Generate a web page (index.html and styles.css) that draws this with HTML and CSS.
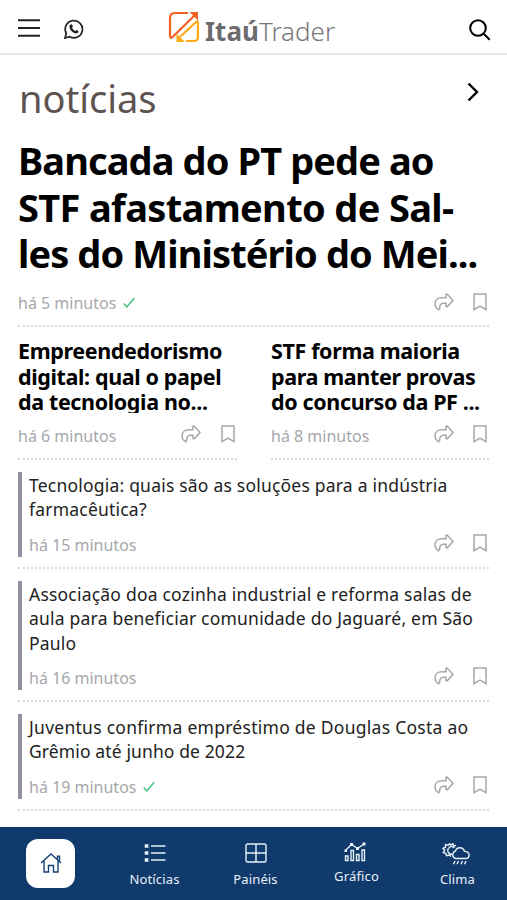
FILE: index.html
```html
<!DOCTYPE html>
<html lang="pt-BR">
<head>
<meta charset="utf-8">
<title>ItaúTrader</title>
<link rel="stylesheet" href="styles.css">
</head>
<body>
<svg class="defs" aria-hidden="true">
  <symbol id="share" viewBox="0 0 20 18"><path d="M12 4.700V1.400L13.200 1 19 7.500 13.200 13.800 12 13.400V10.300H9.600C6.600 10.300 5.500 12 5.700 15.600L4.600 16.800C2.300 15.400 1 13.400 1 10.800 1 7 4 4.700 8 4.700Z"/></symbol>
  <symbol id="bookmark" viewBox="0 0 14 18"><path d="M1 1H13V16.6L7 13 1 16.6Z"/></symbol>
  <symbol id="check" viewBox="0 0 12 12"><path d="M.8 6.4 3.8 9.9 11.2 1.2"/></symbol>
</svg>
<div class="app">
  <header class="top">
    <svg class="menu" viewBox="0 0 22 18"><path d="M0 1.3H22M0 9H22M0 16.7H22"/></svg>
    <svg class="whats" viewBox="0 0 20 20"><path d="M1 19 2.3 14.3A8.6 8.6 0 1 1 5.7 17.7Z"/><path class="phone" d="M6.9 5.2 8.1 5.4 8.9 7.5 8 8.8C8.8 10.4 9.9 11.3 11.4 12L12.4 10.9 14.5 12C14.5 13.8 13.3 14.5 12.2 14.5 8.8 14.2 5.7 11 5.5 8 5.4 6.7 6 5.5 6.9 5.2Z"/></svg>
    <div class="logo">
      <svg viewBox="0 0 32 32"><path class="l1" d="M20 2H7Q2 2 2 7V25Q2.500 28 4.500 26L26 5"/><path class="l1f" d="M21.5 1H30V9.5Z"/><path class="l2" d="M18 30H26Q30 30 30 26V12Q30 9 27.500 11.500L12 26"/><path class="l2f" d="M8.500 22.500V31H17Z"/></svg>
      <span class="name"><b>Itaú</b><span>Trader</span></span>
    </div>
    <svg class="search" viewBox="0 0 22 22"><circle cx="9" cy="9" r="7.8"/><path d="M14.7 14.7 20.7 20.7"/></svg>
  </header>
  <main>
    <div class="section"><h1>notícias</h1><svg class="next" viewBox="0 0 12 20"><path d="M1.5 1.5 10 10 1.5 18.5"/></svg></div>
    <article class="lead">
      <h2><span>Bancada do PT pede ao</span><span class="wide">STF afastamento de Sal-</span><span>les do Ministério do Mei...</span></h2>
      <div class="meta"><time>há 5 minutos</time><svg class="check"><use href="#check"/></svg><svg class="share"><use href="#share"/></svg><svg class="bookmark"><use href="#bookmark"/></svg></div>
    </article>
    <div class="pair">
      <article>
        <h3><span>Empreendedorismo</span><span>digital: qual o papel</span><span>da tecnologia no...</span></h3>
        <div class="meta"><time>há 6 minutos</time><svg class="share"><use href="#share"/></svg><svg class="bookmark"><use href="#bookmark"/></svg></div>
      </article>
      <article>
        <h3><span>STF forma maioria</span><span>para manter provas</span><span>do concurso da PF ...</span></h3>
        <div class="meta"><time>há 8 minutos</time><svg class="share"><use href="#share"/></svg><svg class="bookmark"><use href="#bookmark"/></svg></div>
      </article>
    </div>
    <article class="item"><div class="body">
      <p><span>Tecnologia: quais são as soluções para a indústria</span><span>farmacêutica?</span></p>
      <div class="meta"><time>há 15 minutos</time><svg class="share"><use href="#share"/></svg><svg class="bookmark"><use href="#bookmark"/></svg></div>
    </div></article>
    <article class="item"><div class="body">
      <p><span>Associação doa cozinha industrial e reforma salas de</span><span>aula para beneficiar comunidade do Jaguaré, em São</span><span>Paulo</span></p>
      <div class="meta"><time>há 16 minutos</time><svg class="share"><use href="#share"/></svg><svg class="bookmark"><use href="#bookmark"/></svg></div>
    </div></article>
    <article class="item last"><div class="body">
      <p><span>Juventus confirma empréstimo de Douglas Costa ao</span><span class="tight">Grêmio até junho de 2022</span></p>
      <div class="meta"><time>há 19 minutos</time><svg class="check"><use href="#check"/></svg><svg class="share"><use href="#share"/></svg><svg class="bookmark"><use href="#bookmark"/></svg></div>
    </div></article>
  </main>
  <nav>
    <a class="home"><svg viewBox="0 0 22 20"><path d="M1 10 11 1 21 10M4 8V19H8.5V12.5H13.5V19H18V8M17.5 6V3.2H19.5V8"/></svg></a>
    <a><svg viewBox="0 0 22 20"><path d="M7 3H21.500M7 10H21.500M7 17H21.500"/><path class="fill" d="M.7 1.200H4.400V4.700H.7ZM.7 8.300H4.400V11.700H.7ZM.7 15.300H4.400V18.800H.7Z"/></svg>Notícias</a>
    <a><svg viewBox="0 0 22 20"><rect x="1" y="1" width="20" height="18" rx="1.5"/><path d="M11 1V19M1 10H21"/></svg>Painéis</a>
    <a class="chart"><svg viewBox="0 0 22 20"><path d="M1.500 8.500 7.500 2.500 13.500 6.500 20 2"/><path d="M1.500 14H4V18.500H1.500ZM7 8.500H9.500V18.500H7ZM12.500 12.500H15V18.500H12.500ZM18 8H20.500V18.500H18Z"/><path class="fill" d="M6 1H9V4H6ZM12 5H15V8H12ZM18.5 .5H21.5V3.5H18.500ZM.5 7.500H3V10H.5Z"/></svg>Gráfico</a>
    <a><svg class="weather" viewBox="0 0 28 22"><path d="M13.500 15.500A3.800 3.800 0 0 1 13.500 8.200C14.500 3.800 21 3.500 22.500 8.400 28.500 8.500 28.500 15.500 23.500 15.500Z"/><path d="M10 11.200A3.800 3.800 0 1 1 12.500 5M7.800 .5 8.600 2.200 11 .7 11.500 3 14 2.500M7.800 .5 6.300 2.200 3.500 1.600 3.500 4.200 1 5.300 2.700 7.200 1.300 9.600 3.800 10.300 4.500 12.700 7.300 12 9 13.500"/><path d="M13 18 11.500 21.300M16.500 18 15 21.300M20.500 18 19 21.300M24 18 22.500 21.300"/></svg>Clima</a>
  </nav>
</div>
</body>
</html>
```
FILE: styles.css
```css
* { box-sizing: border-box; margin: 0; padding: 0; }
body { width: 507px; height: 900px; overflow: hidden; background: #fff; font-family: "Noto Sans", "Open Sans", sans-serif; color: #000; }
svg { display: block; flex: none; fill: none; stroke: currentColor; }
.defs { display: none; }
.app { height: 900px; display: flex; flex-direction: column; }
.top { height: 55px; flex: none; border-bottom: 2px solid #e7e7e7; display: flex; align-items: center; padding: 0 16px 0 18px; }
.menu { width: 22px; height: 18px; stroke-width: 2; stroke: #222; margin-top: 2px; }
.whats { width: 20px; height: 20px; margin-left: 24px; margin-top: 4px; stroke-width: 1.7; stroke: #222; }
.phone { fill: #222; stroke: none; }
.logo { display: flex; align-items: center; margin-left: 84px; color: #77777a; }
.logo svg { width: 32px; height: 32px; stroke-width: 2.2; stroke-linejoin: round; }
.l1 { stroke: #f26022; } .l1f { fill: #f26022; stroke: none; }
.l2 { stroke: #fbab18; } .l2f { fill: #fbab18; stroke: none; }
.name { font-size: 26px; line-height: 32px; margin-left: 5px; margin-top: 9px; white-space: nowrap; }
.name b { color: #6c6c6e; }
.name span { font-weight: 300; }
.search { width: 22px; height: 22px; margin-left: auto; margin-top: 6px; stroke-width: 2; }
main { flex: 1; padding: 0 18px; }
.section { height: 82px; display: flex; justify-content: space-between; padding-right: 10px; }
.section h1 { font-weight: 400; font-size: 38px; line-height: 52px; padding: 17px 0 0 1px; color: #5d5452; }
.next { width: 12px; height: 20px; margin-top: 27px; stroke-width: 2.4; }
h2 span, h3 span, p span { display: block; white-space: nowrap; }
.lead { height: 190px; border-bottom: 2px dotted #d9d9d9; }
h2 { font-size: 38px; line-height: 46.5px; height: 140px; letter-spacing: -.9px; }
h2 .wide { letter-spacing: -.65px; }
.meta { display: flex; align-items: center; height: 24px; font-size: 16px; color: #a7a7ab; }
.share { width: 20px; height: 18px; margin-left: auto; stroke-width: 1.5; }
.bookmark { width: 14px; height: 18px; margin: 0 2px 0 19px; stroke-width: 1.5; }
.check { width: 12px; height: 12px; margin-left: 7px; stroke: #46bd7c; stroke-width: 1.5; }
.lead .meta { margin-top: 14px; }
.lead .share, .lead .bookmark { margin-bottom: 2px; }
.pair { display: grid; grid-template-columns: 219px 218px; justify-content: space-between; }
.pair article { height: 133px; border-bottom: 2px dotted #d9d9d9; padding-top: 8px; }
h3 { font-size: 21.5px; line-height: 25.7px; height: 78px; padding-top: 3px; overflow: hidden; letter-spacing: -.37px; }
.pair .meta { margin-top: 11px; }
.pair .share, .pair .bookmark, .item .share, .item .bookmark { margin-bottom: 4px; }
.pair article:first-child .share { margin-right: 1px; }
.item { padding: 12px 0 11px; border-bottom: 2px dotted #d9d9d9; }
.body { border-left: 4px solid #9291a0; padding-left: 7px; }
.item p { font-size: 17.5px; letter-spacing: .21px; line-height: 24.4px; padding-top: 1px; color: #222; }
.last p { letter-spacing: .27px; }
.last .tight { letter-spacing: .12px; }
.item .meta { margin-top: 11px; margin-bottom: -1px; }
nav { height: 73px; flex: none; background: #103a6b; color: #e8f0fa; display: flex; font-size: 13px; letter-spacing: .15px; padding-left: 1px; }
nav a { width: 101px; flex: none; display: flex; flex-direction: column; align-items: center; padding-top: 16px; line-height: 18px; gap: 7px; }
nav svg { width: 22px; height: 20px; stroke-width: 1.4; }
nav .weather { width: 28px; height: 22px; margin-bottom: -2px; margin-left: -4px; }
nav .home { width: 49px; height: 49px; margin: 12px 29px 0 25px; padding-top: 14px; background: #fff; color: #174174; border-radius: 12px; }
nav .chart { padding-top: 15px; gap: 5px; }
.chart svg { margin-left: -3px; }
.fill { fill: currentColor; stroke: none; }
```
